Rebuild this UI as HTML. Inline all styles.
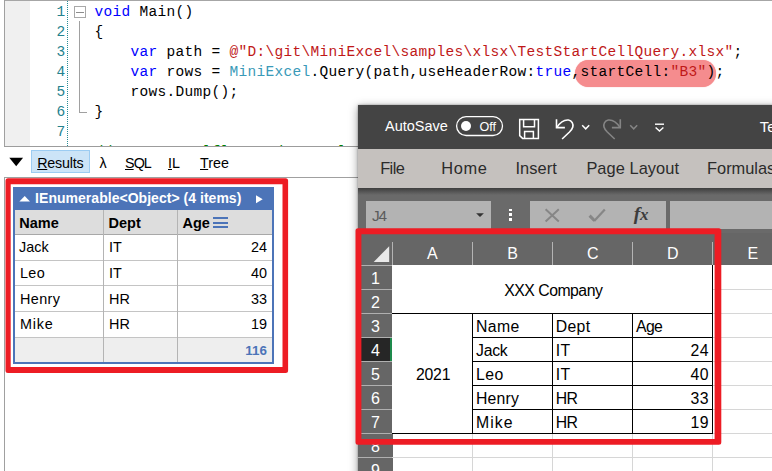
<!DOCTYPE html>
<html>
<head>
<meta charset="utf-8">
<title>MiniExcel startCell demo</title>
<style>
html,body{margin:0;padding:0;}
body{width:772px;height:471px;overflow:hidden;position:relative;background:#fff;font-family:"Liberation Sans",sans-serif;}
.a{position:absolute;}
.t{position:absolute;white-space:pre;line-height:1;}
/* ---------- LINQPad editor ---------- */
.code{position:absolute;left:94.4px;white-space:pre;font-family:"Liberation Mono",monospace;font-size:14.5px;letter-spacing:0.3px;line-height:20px;height:20px;color:#000;}
.ln{position:absolute;left:40px;width:25.2px;text-align:right;font-family:"Liberation Mono",monospace;font-size:14.5px;line-height:20px;height:20px;color:#23828e;}
.kw{color:#0000ff;}
.ty{color:#3a9ab8;}
.st{color:#c01818;}
.cm{color:#008000;}
/* ---------- Result table ---------- */
.rt{position:absolute;font-size:14.4px;color:#000;white-space:pre;line-height:1;}
/* ---------- Excel ---------- */
.xl{position:absolute;left:358px;top:105px;width:420px;height:380px;background:#6a6a6a;box-shadow:0 2px 9px 0 rgba(0,0,0,0.40),0 0 2px 0 rgba(0,0,0,0.35);overflow:hidden;}
.xi{position:absolute;left:0.5px;top:0;width:420px;height:380px;}
.tab{position:absolute;top:0;font-size:16.4px;color:#2b2b2b;white-space:pre;line-height:1;}
.hd{position:absolute;color:#fff;font-size:16px;line-height:1;white-space:pre;}
.cell{position:absolute;font-size:15.8px;color:#000;line-height:1;white-space:pre;}
</style>
</head>
<body>

<!-- ================= LINQPad editor ================= -->
<div class="a" style="left:4px;top:0;width:768px;height:1px;background:#a6a6a6"></div>
<div class="a" style="left:4px;top:0;width:1px;height:147px;background:#a0a0a0"></div>
<div class="a" style="left:5px;top:1px;width:25px;height:145px;background:#f0f0f0"></div>
<div class="a" style="left:4px;top:146px;width:768px;height:1px;background:#9c9c9c"></div>
<!-- dotted margin -->
<div class="a" style="left:67px;top:1px;width:0;height:145px;border-left:1px dotted #2a8c96"></div>

<div class="ln" style="top:1.6px">1</div>
<div class="ln" style="top:21.6px">2</div>
<div class="ln" style="top:41.6px">3</div>
<div class="ln" style="top:61.6px">4</div>
<div class="ln" style="top:81.6px">5</div>
<div class="ln" style="top:101.6px">6</div>
<div class="ln" style="top:121.6px">7</div>

<!-- fold box + guide -->
<div class="a" style="left:74px;top:6px;width:10px;height:10px;border:1px solid #a8a8a8;background:#fff"></div>
<div class="a" style="left:76px;top:11.5px;width:8px;height:1px;background:#8c8c8c"></div>
<div class="a" style="left:79.3px;top:21px;width:1px;height:91px;background:#a0a0a0"></div>
<div class="a" style="left:79.3px;top:111.5px;width:7.5px;height:1px;background:#a0a0a0"></div>

<!-- highlight pill -->
<div class="a" style="left:575px;top:60px;width:141.4px;height:27.2px;border-radius:13.6px;background:#f58c8e;box-shadow:0 0 1px #f58c8e"></div>

<div class="code" style="top:1.6px"><span class="kw">void</span> Main()</div>
<div class="code" style="top:21.6px">{</div>
<div class="code" style="top:41.6px">    <span class="kw">var</span> path = <span class="st">@"D:\git\MiniExcel\samples\xlsx\TestStartCellQuery.xlsx"</span>;</div>
<div class="code" style="top:61.6px">    <span class="kw">var</span> rows = <span class="ty">MiniExcel</span>.Query(path,useHeaderRow:<span class="kw">true</span>,startCell:<span class="st">"B3"</span>);</div>
<div class="code" style="top:81.6px">    rows.Dump();</div>
<div class="code" style="top:101.6px">}</div>
<!-- clipped comment line 8 (only ascender tips visible) -->
<div class="a" style="left:94px;top:144px;width:260px;height:2px;overflow:hidden"><div class="code cm" style="left:0.4px;top:-2.4px">//          lfl     d      l</div></div>

<!-- ================= Results toolbar ================= -->
<div class="a" style="left:31px;top:150px;width:56.9px;height:20.7px;border:1px solid #9cccf2;background:#cce4f7"></div>
<div class="t" style="left:37.2px;top:155.5px;font-size:14.3px;color:#000;letter-spacing:-0.2px"><span style="text-decoration:underline">R</span>esults</div>
<div class="t" style="left:99.5px;top:155.5px;font-size:14.3px;color:#000">λ</div>
<div class="t" style="left:125px;top:155.5px;font-size:14.3px;color:#000;letter-spacing:-0.9px"><span style="text-decoration:underline">S</span>QL</div>
<div class="t" style="left:168px;top:155.5px;font-size:14.3px;color:#000"><span style="text-decoration:underline">I</span>L</div>
<div class="t" style="left:200px;top:155.5px;font-size:14.3px;color:#000"><span style="text-decoration:underline">T</span>ree</div>

<!-- ================= Results panel ================= -->
<div class="a" style="left:4px;top:177px;width:768px;height:1px;background:#a0a0a0"></div>
<div class="a" style="left:4px;top:177px;width:1px;height:300px;background:#a0a0a0"></div>

<!-- table -->
<div class="a" style="left:13px;top:187px;width:261px;height:177px;background:#fff"></div>
<div class="a" style="left:13px;top:187px;width:261px;height:23px;background:#4c74b8"></div>
<div class="a" style="left:14.5px;top:210px;width:258.5px;height:24px;background:#dddddd"></div>
<div class="a" style="left:15px;top:337px;width:257px;height:25px;background:#eeeeee"></div>
<!-- row lines -->
<div class="a" style="left:14.5px;top:233.6px;width:258.5px;height:1px;background:#a8a8a8"></div>
<div class="a" style="left:14.5px;top:259.5px;width:258.5px;height:1px;background:#c4c4c4"></div>
<div class="a" style="left:14.5px;top:285.2px;width:258.5px;height:1px;background:#c4c4c4"></div>
<div class="a" style="left:14.5px;top:310.8px;width:258.5px;height:1px;background:#c4c4c4"></div>
<div class="a" style="left:14.5px;top:336.5px;width:258.5px;height:1px;background:#c4c4c4"></div>
<!-- col lines -->
<div class="a" style="left:103px;top:210px;width:1px;height:153px;background:#b4b4b4"></div>
<div class="a" style="left:177.3px;top:210px;width:1px;height:153px;background:#b4b4b4"></div>
<!-- blue frame -->
<div class="a" style="left:13px;top:187px;width:257px;height:175px;border:2px solid #4c74b8;border-top:none"></div>

<div class="rt" style="left:35.1px;top:191.4px;color:#fff;font-weight:bold;font-size:14px;letter-spacing:0.03px">IEnumerable&lt;Object&gt; (4 items)</div>

<div class="rt" style="left:19.3px;top:215.5px;font-weight:bold;font-size:14.5px">Name</div>
<div class="rt" style="left:108.5px;top:215.5px;font-weight:bold;font-size:14.5px">Dept</div>
<div class="rt" style="left:182.5px;top:215.5px;font-weight:bold;font-size:14.5px">Age</div>
<div class="a" style="left:213px;top:217.4px;width:15px;height:2px;background:#4c74b8"></div>
<div class="a" style="left:213px;top:221.6px;width:15px;height:2px;background:#4c74b8"></div>
<div class="a" style="left:213px;top:225.8px;width:15px;height:2px;background:#4c74b8"></div>

<div class="rt" style="left:19px;top:240.4px">Jack</div>
<div class="rt" style="left:109px;top:240.4px">IT</div>
<div class="rt" style="left:200px;top:240.4px;width:66.9px;text-align:right">24</div>
<div class="rt" style="left:19.9px;top:266.1px;letter-spacing:0.4px">Leo</div>
<div class="rt" style="left:109px;top:266.1px">IT</div>
<div class="rt" style="left:200px;top:266.1px;width:66.9px;text-align:right">40</div>
<div class="rt" style="left:20px;top:291.8px;letter-spacing:0.4px">Henry</div>
<div class="rt" style="left:109px;top:291.8px">HR</div>
<div class="rt" style="left:200px;top:291.8px;width:66.9px;text-align:right">33</div>
<div class="rt" style="left:20px;top:317.4px;letter-spacing:0.8px">Mike</div>
<div class="rt" style="left:109px;top:317.4px">HR</div>
<div class="rt" style="left:200px;top:317.4px;width:66.9px;text-align:right">19</div>
<div class="rt" style="left:200px;top:343.2px;width:66.9px;text-align:right;color:#4c74b8;font-weight:bold;font-size:13.4px;margin-top:0.6px">116</div>

<!-- red rectangle 1: drawn in overlay svg at end -->

<!-- ================= Excel window ================= -->
<div class="xl"><div class="xi">
  <!-- title bar -->
  <div class="a" style="left:-1px;top:0;width:421px;height:43.5px;background:#444444"></div>
  <div class="t" style="left:26.5px;top:14.2px;font-size:14.5px;color:#fff">AutoSave</div>
  <svg class="a" style="left:96px;top:9px" width="52" height="24" viewBox="0 0 52 24"><rect x="1.6" y="2.6" width="45.9" height="18.9" rx="9.45" fill="none" stroke="#fff" stroke-width="1.3"/></svg>
  <div class="a" style="left:102.5px;top:16.2px;width:10px;height:10px;border-radius:50%;background:#fff"></div>
  <div class="t" style="left:121px;top:16px;font-size:12.6px;color:#fff">Off</div>
  <!-- save icon -->
  <svg class="a" style="left:158px;top:12px" width="24" height="24" viewBox="0 0 24 24" fill="none" stroke="#fff" stroke-width="1.5">
    <path d="M2.7 2.4 H21.4 V21.4 H5.6 L2.7 18.6 Z"/>
    <path d="M6.6 2.4 V9.8 H17.5 V2.4"/>
    <path d="M7.6 21.4 V14.6 H16.4 V21.4"/>
  </svg>
  <!-- undo -->
  <svg class="a" style="left:194px;top:11px" width="24" height="26" viewBox="0 0 24 26" fill="none" stroke="#fff" stroke-width="1.6">
    <path d="M3.5 3.2 V11.6 H11.9"/>
    <path d="M4.1 11.2 C7 6.5 11.5 3.6 15.5 4 C19 4.5 20.5 8 19.8 11 C19.3 13 18 14.5 16.5 16 L9.1 23"/>
  </svg>
  <svg class="a" style="left:222.5px;top:19px" width="10" height="7" viewBox="0 0 10 7" fill="none" stroke="#fff" stroke-width="1.5"><path d="M1.2 1.2 L4.7 4.8 L8.2 1.2"/></svg>
  <!-- redo -->
  <svg class="a" style="left:243px;top:11px" width="24" height="26" viewBox="0 0 24 26" fill="none" stroke="#858585" stroke-width="1.6">
    <path d="M18.3 3.2 V11.6 H9.9"/>
    <path d="M17.7 11.2 C14.8 6.5 10.3 3.6 6.3 4 C2.8 4.5 1.3 8 2 11 C2.5 13 3.8 14.5 5.3 16 L12.7 23"/>
  </svg>
  <svg class="a" style="left:270.5px;top:19px" width="10" height="7" viewBox="0 0 10 7" fill="none" stroke="#858585" stroke-width="1.5"><path d="M1.2 1.2 L4.7 4.8 L8.2 1.2"/></svg>
  <!-- customize -->
  <svg class="a" style="left:295.5px;top:17.5px" width="12" height="10" viewBox="0 0 12 10" fill="none" stroke="#fff" stroke-width="1.4"><path d="M1 1.2 H10"/><path d="M1.6 4.4 L5.5 8 L9.4 4.4"/></svg>
  <div class="t" style="left:401.3px;top:13.8px;font-size:15px;color:#fff">Te</div>

  <!-- ribbon tab row -->
  <div class="a" style="left:-1px;top:43.5px;width:421px;height:39px;background:#c5c1be"></div>
  <div class="tab" style="left:21.7px;top:54.5px;letter-spacing:-0.6px">File</div>
  <div class="tab" style="left:82.8px;top:54.5px;letter-spacing:0.6px">Home</div>
  <div class="tab" style="left:156.9px;top:54.5px;letter-spacing:0.1px">Insert</div>
  <div class="tab" style="left:227.9px;top:54.5px;letter-spacing:0.05px">Page Layout</div>
  <div class="tab" style="left:348.5px;top:54.5px">Formulas</div>

  <!-- shadow below ribbon -->
  <div class="a" style="left:-1px;top:82.5px;width:421px;height:7px;background:linear-gradient(#3e3e3e,#6a6a6a)"></div>

  <!-- formula bar -->
  <div class="a" style="left:7.3px;top:95.6px;width:125.7px;height:28px;background:#b3b3b3"></div>
  <div class="t" style="left:13.6px;top:103.3px;font-size:15.4px;color:#5c5c5c;letter-spacing:-1.4px">J4</div>
  <svg class="a" style="left:110px;top:100px" width="20" height="20" viewBox="0 0 20 20"><path d="M7.1 8.2 H14.9 L11 12 Z" fill="#333"/></svg>
  <div class="a" style="left:150.6px;top:103.5px;width:2.6px;height:2.6px;background:#fff"></div>
  <div class="a" style="left:150.6px;top:108.3px;width:2.6px;height:2.6px;background:#fff"></div>
  <div class="a" style="left:150.6px;top:113.1px;width:2.6px;height:2.6px;background:#fff"></div>
  <div class="a" style="left:171.5px;top:95.6px;width:135.6px;height:28px;background:#b3b3b3"></div>
  <svg class="a" style="left:185px;top:103px" width="17" height="15" viewBox="0 0 17 15" fill="none" stroke="#868686" stroke-width="2"><path d="M1.6 1.2 L14.8 13.4 M14.8 1.2 L1.6 13.4"/></svg>
  <svg class="a" style="left:229.5px;top:103.2px" width="19" height="16" viewBox="0 0 19 16" fill="none" stroke="#868686"><path d="M1.6 7.6 L6.6 12.8" stroke-width="3"/><path d="M6.2 13 L16.8 1.6" stroke-width="2.2"/></svg>
  <div class="t" style="left:275.2px;top:99.3px;font-family:'Liberation Serif',serif;font-style:italic;font-weight:bold;font-size:19.5px;color:#3c3c3c;letter-spacing:-0.1px">f<span style="font-size:17px">x</span></div>
  <div class="a" style="left:311.3px;top:95.6px;width:120px;height:28px;background:#b3b3b3"></div>

  <!-- grid -->
  <div class="a" style="left:34px;top:160px;width:390px;height:230px;background:#fff"></div>
  <div class="a" style="left:-1px;top:128px;width:421px;height:32.3px;background:#666666"></div>
  <div class="a" style="left:-1px;top:160px;width:35px;height:230px;background:#666666"></div>
  <!-- GRID-START -->
  <div class="a" style="left:33.9px;top:184.0px;width:390px;height:1px;background:#d6d6d6"></div>
  <div class="a" style="left:33.9px;top:207.9px;width:390px;height:1px;background:#d6d6d6"></div>
  <div class="a" style="left:33.9px;top:231.9px;width:390px;height:1px;background:#d6d6d6"></div>
  <div class="a" style="left:33.9px;top:255.9px;width:390px;height:1px;background:#d6d6d6"></div>
  <div class="a" style="left:33.9px;top:279.9px;width:390px;height:1px;background:#d6d6d6"></div>
  <div class="a" style="left:33.9px;top:303.8px;width:390px;height:1px;background:#d6d6d6"></div>
  <div class="a" style="left:33.9px;top:327.8px;width:390px;height:1px;background:#d6d6d6"></div>
  <div class="a" style="left:33.9px;top:351.8px;width:390px;height:1px;background:#d6d6d6"></div>
  <div class="a" style="left:33.9px;top:375.8px;width:390px;height:1px;background:#d6d6d6"></div>
  <div class="a" style="left:113.5px;top:160.3px;width:1px;height:230px;background:#d6d6d6"></div>
  <div class="a" style="left:193.7px;top:160.3px;width:1px;height:230px;background:#d6d6d6"></div>
  <div class="a" style="left:273.7px;top:160.3px;width:1px;height:230px;background:#d6d6d6"></div>
  <div class="a" style="left:353.8px;top:160.3px;width:1px;height:230px;background:#d6d6d6"></div>
  <div class="a" style="left:433.8px;top:160.3px;width:1px;height:230px;background:#d6d6d6"></div>
  <div class="a" style="left:33.9px;top:160.3px;width:320.4px;height:48.1px;background:#fff"></div>
  <div class="a" style="left:33.9px;top:208.4px;width:80.1px;height:119.9px;background:#fff"></div>
  <div class="a" style="left:33.3px;top:207.7px;width:321.6px;height:1.3px;background:#000"></div>
  <div class="a" style="left:113.4px;top:231.7px;width:241.5px;height:1.3px;background:#000"></div>
  <div class="a" style="left:113.4px;top:255.7px;width:241.5px;height:1.3px;background:#000"></div>
  <div class="a" style="left:113.4px;top:279.7px;width:241.5px;height:1.3px;background:#000"></div>
  <div class="a" style="left:113.4px;top:303.6px;width:241.5px;height:1.3px;background:#000"></div>
  <div class="a" style="left:33.3px;top:327.6px;width:321.6px;height:1.3px;background:#000"></div>
  <div class="a" style="left:113.3px;top:207.8px;width:1.3px;height:121.1px;background:#000"></div>
  <div class="a" style="left:193.5px;top:207.8px;width:1.3px;height:121.1px;background:#000"></div>
  <div class="a" style="left:273.5px;top:207.8px;width:1.3px;height:121.1px;background:#000"></div>
  <div class="a" style="left:353.6px;top:159.7px;width:1.3px;height:169.2px;background:#000"></div>
  <div class="a" style="left:33.4px;top:137px;width:1px;height:23.3px;background:#b4b4b4"></div>
  <div class="a" style="left:113.5px;top:137px;width:1px;height:23.3px;background:#b4b4b4"></div>
  <div class="a" style="left:193.7px;top:137px;width:1px;height:23.3px;background:#b4b4b4"></div>
  <div class="a" style="left:273.7px;top:137px;width:1px;height:23.3px;background:#b4b4b4"></div>
  <div class="a" style="left:353.8px;top:137px;width:1px;height:23.3px;background:#b4b4b4"></div>
  <div class="hd" style="left:33.9px;top:141px;width:80.1px;text-align:center">A</div>
  <div class="hd" style="left:114.0px;top:141px;width:80.2px;text-align:center">B</div>
  <div class="hd" style="left:194.2px;top:141px;width:80.0px;text-align:center">C</div>
  <div class="hd" style="left:274.2px;top:141px;width:80.1px;text-align:center">D</div>
  <div class="hd" style="left:354.3px;top:141px;width:80.0px;text-align:center">E</div>
  <svg class="a" style="left:14px;top:140px" width="18" height="18" viewBox="0 0 18 18"><path d="M16.2 1.2 V16.9 H0.7 Z" fill="#e9e9e9"/></svg>
  <div class="a" style="left:-1px;top:232.4px;width:33.4px;height:24.0px;background:#262626"></div>
  <div class="a" style="left:31.9px;top:232.4px;width:1.6px;height:24.0px;background:#1e8a4c"></div>
  <div class="a" style="left:-1px;top:159.8px;width:34.9px;height:1px;background:#b0b0b0"></div>
  <div class="a" style="left:-1px;top:184.0px;width:34.9px;height:1px;background:#b0b0b0"></div>
  <div class="a" style="left:-1px;top:207.9px;width:34.9px;height:1px;background:#b0b0b0"></div>
  <div class="a" style="left:-1px;top:231.9px;width:34.9px;height:1px;background:#b0b0b0"></div>
  <div class="a" style="left:-1px;top:255.9px;width:34.9px;height:1px;background:#b0b0b0"></div>
  <div class="a" style="left:-1px;top:279.9px;width:34.9px;height:1px;background:#b0b0b0"></div>
  <div class="a" style="left:-1px;top:303.8px;width:34.9px;height:1px;background:#b0b0b0"></div>
  <div class="a" style="left:-1px;top:327.8px;width:34.9px;height:1px;background:#b0b0b0"></div>
  <div class="a" style="left:-1px;top:351.8px;width:34.9px;height:1px;background:#b0b0b0"></div>
  <div class="hd" style="left:0;top:165.5px;width:33.9px;text-align:center">1</div>
  <div class="hd" style="left:0;top:189.7px;width:33.9px;text-align:center">2</div>
  <div class="hd" style="left:0;top:213.6px;width:33.9px;text-align:center">3</div>
  <div class="hd" style="left:0;top:237.6px;width:33.9px;text-align:center">4</div>
  <div class="hd" style="left:0;top:261.6px;width:33.9px;text-align:center">5</div>
  <div class="hd" style="left:0;top:285.6px;width:33.9px;text-align:center">6</div>
  <div class="hd" style="left:0;top:309.5px;width:33.9px;text-align:center">7</div>
  <div class="hd" style="left:0;top:333.5px;width:33.9px;text-align:center">8</div>
  <div class="hd" style="left:0;top:357.5px;width:33.9px;text-align:center">9</div>
  <div class="cell" style="left:94.8px;width:200px;text-align:center;top:177.6px;letter-spacing:-0.5px">XXX Company</div>
  <div class="cell" style="left:-25.4px;width:200px;text-align:center;top:261.6px;letter-spacing:-0.2px">2021</div>
  <div class="cell" style="left:117.5px;top:214.3px;letter-spacing:0.4px">Name</div>
  <div class="cell" style="left:197.3px;top:214.3px;letter-spacing:0.3px">Dept</div>
  <div class="cell" style="left:277.5px;top:214.3px;letter-spacing:-0.6px">Age</div>
  <div class="cell" style="left:117.5px;top:238.3px;letter-spacing:-0.25px">Jack</div>
  <div class="cell" style="left:197.3px;top:238.3px;letter-spacing:0.3px">IT</div>
  <div class="cell" style="left:250.7px;width:100px;text-align:right;top:238.3px;letter-spacing:0.6px">24</div>
  <div class="cell" style="left:117.5px;top:262.3px;letter-spacing:0.5px">Leo</div>
  <div class="cell" style="left:197.3px;top:262.3px;letter-spacing:0.3px">IT</div>
  <div class="cell" style="left:250.7px;width:100px;text-align:right;top:262.3px;letter-spacing:0.6px">40</div>
  <div class="cell" style="left:117.5px;top:286.3px;letter-spacing:0.2px">Henry</div>
  <div class="cell" style="left:197.3px;top:286.3px;letter-spacing:-0.6px">HR</div>
  <div class="cell" style="left:250.7px;width:100px;text-align:right;top:286.3px;letter-spacing:0.6px">33</div>
  <div class="cell" style="left:117.5px;top:310.2px;letter-spacing:1.1px">Mike</div>
  <div class="cell" style="left:197.3px;top:310.2px;letter-spacing:-0.6px">HR</div>
  <div class="cell" style="left:250.7px;width:100px;text-align:right;top:310.2px;letter-spacing:0.6px">19</div>
  <!-- GRID-END -->
</div></div>

<!-- red rectangles overlay -->
<svg class="a" style="left:0;top:0;pointer-events:none" width="772" height="471" viewBox="0 0 772 471"><path d="M9.3 157.8 H23.1 L16.2 166.3 Z" fill="#000"/><path d="M19.4 201.4 H30 L24.7 196 Z" fill="#fff"/><path d="M256 195.2 V203.2 L262.7 199.2 Z" fill="#fff"/><path d="M8.0 178.3 H285.6 Q288.1 178.3 288.1 180.8 V370.6 Q288.1 373.1 285.6 373.1 H8.0 Q5.5 373.1 5.5 370.6 V180.8 Q5.5 178.3 8.0 178.3 Z M10.7 184.2 V367.1 H282.5 V184.2 Z" fill="#ed1c24" fill-rule="evenodd"/><path d="M358.0 228.3 H718.8 Q721.3 228.3 721.3 230.8 V442.2 Q721.3 444.7 718.8 444.7 H358.0 Q355.5 444.7 355.5 442.2 V230.8 Q355.5 228.3 358.0 228.3 Z M361.4 234.2 V438.9 H714.6 V234.2 Z" fill="#ed1c24" fill-rule="evenodd"/></svg>

</body>
</html>
